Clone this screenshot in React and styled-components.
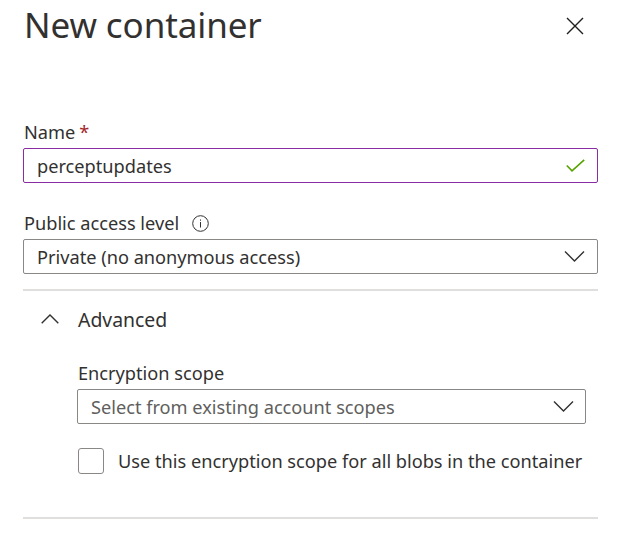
import React from 'react';
import styled, { createGlobalStyle } from 'styled-components';

const GlobalStyle = createGlobalStyle`
    html, body {
        margin: 0;
        padding: 0;
        background: #ffffff;
    }
    body {
        font-family: "Noto Sans", "Open Sans", Arial, sans-serif;
        color: #323130;
    }
`;

const Panel = styled.div`
    width: 624px;
    height: 534px;
    box-sizing: border-box;
    padding: 0 26px 0 23px;
    overflow: hidden;
`;

const Header = styled.header`
    display: flex;
    justify-content: space-between;
    align-items: flex-start;
    height: 60px;
    padding-left: 1px;
`;

const Title = styled.h1`
    margin: 0;
    padding-top: 1px;
    font-size: 35px;
    font-weight: 400;
    line-height: 48px;
    color: #323130;
    letter-spacing: -0.1px;
`;

const CloseButton = styled.button`
    border: 0;
    background: none;
    padding: 0;
    margin: 17px 14px 0 0;
    width: 18px;
    height: 18px;
    display: flex;
    cursor: pointer;
`;

const Form = styled.div`
    padding-top: 58px;
`;

const Field = styled.div`
    display: flex;
    flex-direction: column;
    margin-bottom: ${(p) => p.gap || 0}px;
`;

const Label = styled.label`
    display: flex;
    align-items: center;
    gap: 4px;
    font-size: 18.2px;
    line-height: 28px;
    height: 28px;
    margin-bottom: 2px;
    padding-left: 1px;
`;

const Required = styled.span`
    color: #a4262c;
`;

const InfoIcon = styled.span`
    display: inline-flex;
    margin-left: 9px;
`;

const Box = styled.div`
    height: 35px;
    box-sizing: border-box;
    border: 1px solid ${(p) => (p.active ? '#8a2da5' : '#8a8886')};
    border-radius: 2px;
    display: flex;
    align-items: center;
    justify-content: space-between;
    padding: 0 ${(p) => p.padRight || 12}px 0 13px;
    font-size: 18.2px;
    color: ${(p) => (p.placeholder ? '#605e5c' : '#323130')};
`;

const Divider = styled.hr`
    border: 0;
    border-top: 2px solid #e1dfdd;
    margin: ${(p) => p.top}px 0 0 0;
`;

const AdvancedToggle = styled.div`
    display: flex;
    align-items: center;
    height: 56px;
    padding-left: 18px;
    gap: 19px;
    font-size: 19.4px;
`;

const AdvancedBody = styled.div`
    padding-left: 54px;
    padding-right: 12px;
    padding-top: 12px;
`;

const CheckRow = styled.div`
    display: flex;
    align-items: center;
    gap: 14px;
    height: 26px;
    margin-top: 24px;
    padding-left: 1px;
    font-size: 18.2px;
    white-space: nowrap;
`;

const CheckBox = styled.span`
    width: 26px;
    height: 26px;
    box-sizing: border-box;
    border: 1px solid #8a8886;
    border-radius: 3px;
    flex: none;
`;

const ChevronDown = () => (
    <svg width="21" height="11" viewBox="0 0 21 11" fill="none">
        <path d="M1 0.5 L10.5 10 L20 0.5" stroke="#323130" strokeWidth="1.4" />
    </svg>
);

const ChevronUp = () => (
    <svg width="18" height="10" viewBox="0 0 18 10" fill="none">
        <path d="M0.7 9.3 L9 1 L17.3 9.3" stroke="#323130" strokeWidth="1.4" />
    </svg>
);

export default function App() {
    return (
        <>
            <GlobalStyle />
            <Panel>
                <Header>
                    <Title>New container</Title>
                    <CloseButton aria-label="Close">
                        <svg width="18" height="18" viewBox="0 0 18 18">
                            <path d="M1 1 L17 17 M17 1 L1 17" stroke="#201f1e" strokeWidth="1.4" />
                        </svg>
                    </CloseButton>
                </Header>

                <Form>
                    <Field gap={26}>
                        <Label>
                            Name <Required>*</Required>
                        </Label>
                        <Box active>
                            perceptupdates
                            <svg width="19" height="13" viewBox="0 0 19 13" fill="none">
                                <path d="M0.8 6.5 L6 11.8 L18.2 0.8" stroke="#57a300" strokeWidth="1.6" />
                            </svg>
                        </Box>
                    </Field>

                    <Field>
                        <Label>
                            Public access level
                            <InfoIcon>
                                <svg width="17" height="17" viewBox="0 0 17 17" fill="none">
                                    <circle cx="8.5" cy="8.5" r="7.8" stroke="#323130" strokeWidth="1" />
                                    <rect x="8" y="7" width="1" height="5.5" fill="#323130" />
                                    <rect x="8" y="4.5" width="1" height="1.2" fill="#323130" />
                                </svg>
                            </InfoIcon>
                        </Label>
                        <Box>
                            Private (no anonymous access)
                            <ChevronDown />
                        </Box>
                    </Field>

                    <Divider top={15} />

                    <AdvancedToggle>
                        <ChevronUp />
                        Advanced
                    </AdvancedToggle>

                    <AdvancedBody>
                        <Field>
                            <Label>Encryption scope</Label>
                            <Box placeholder="true" padRight={11}>
                                Select from existing account scopes
                                <ChevronDown />
                            </Box>
                        </Field>
                        <CheckRow>
                            <CheckBox />
                            Use this encryption scope for all blobs in the container
                        </CheckRow>
                    </AdvancedBody>

                    <Divider top={43} />
                </Form>
            </Panel>
        </>
    );
}
